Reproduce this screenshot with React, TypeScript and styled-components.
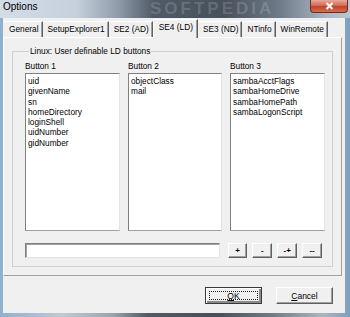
import styled, { createGlobalStyle } from 'styled-components';

const GlobalStyle = createGlobalStyle`
  body {
    margin: 0;
    background: #5d6b7a;
    font-family: "Liberation Sans", Arial, sans-serif;
  }
`;

const Window = styled.div`
  width: 350px;
  height: 317px;
  display: flex;
  flex-direction: column;
  background: linear-gradient(
    90deg,
    #8fb0cf 0%,
    #bfcad6 18%,
    #98a5b3 32%,
    #505b67 42%,
    #46505b 62%,
    #6f7c8a 78%,
    #a9b6c4 92%,
    #7e9fbf 100%
  );
  overflow: hidden;
`;

const TitleBar = styled.div`
  position: relative;
  height: 18px;
  display: flex;
  align-items: flex-start;
  padding-left: 3px;
  background: linear-gradient(
    90deg,
    #d3dde8 0%,
    #c5d0dc 22%,
    #8e9aa8 34%,
    #4f5a66 44%,
    #47515c 64%,
    #6f7b88 80%,
    #aebac7 94%,
    #b9c6d4 100%
  );
`;

const Title = styled.span`
  font-size: 10px;
  line-height: 14px;
  color: #000;
  z-index: 1;
`;

const Watermark = styled.span`
  position: absolute;
  left: 150px;
  top: 0;
  font-size: 17px;
  line-height: 18px;
  font-weight: bold;
  letter-spacing: 3px;
  color: rgba(255, 255, 255, 0.16);
  pointer-events: none;
`;

const CloseButton = styled.div`
  margin-left: auto;
  margin-right: 2px;
  width: 36px;
  height: 12px;
  display: flex;
  align-items: center;
  justify-content: center;
  border: 1px solid #6b2c22;
  border-top: none;
  border-radius: 0 0 4px 4px;
  background: linear-gradient(#e9a898 0%, #d66b55 45%, #c0432b 55%, #d2704f 100%);
  z-index: 1;
`;

const Client = styled.div`
  flex: 1;
  margin: 0 5px 4px 3px;
  background: #f0f0f0;
  display: flex;
  flex-direction: column;
  font-size: 8.3px;
  color: #000;
`;

const TabStrip = styled.div`
  height: 19px;
  display: flex;
  align-items: flex-end;
  padding-left: 1px;
`;

const Tab = styled.div<{ $active?: boolean }>`
  position: relative;
  box-sizing: border-box;
  height: ${(p) => (p.$active ? '19px' : '16px')};
  margin-bottom: ${(p) => (p.$active ? '-1px' : '0')};
  padding: ${(p) => (p.$active ? '2px 4px 0 5px' : '2px 3px 0 5px')};
  line-height: 11px;
  background: #f0f0f0;
  border-top: 1px solid #ffffff;
  border-left: ${(p) => (p.$active ? '1px solid #ffffff' : 'none')};
  border-right: 1px solid #5f5f5f;
  box-shadow: inset -1px 0 #a0a0a0;
  white-space: nowrap;
  z-index: ${(p) => (p.$active ? 2 : 1)};
`;

const Panel = styled.div`
  box-sizing: border-box;
  height: 239px;
  margin-right: 3px;
  padding: 8px;
  border-top: 1px solid #ffffff;
  border-left: 1px solid #ffffff;
  border-right: 1px solid #a0a0a0;
  border-bottom: 1px solid #a0a0a0;
  display: flex;
`;

const GroupBox = styled.fieldset`
  flex: 1;
  margin: 0;
  min-width: 0;
  padding: 5px 10px 8px 12px;
  border: 1px solid #d0d0d0;
  display: flex;
  flex-direction: column;
`;

const Legend = styled.legend`
  margin-left: 4px;
  padding: 0 1px;
  line-height: 10px;
`;

const Columns = styled.div`
  display: grid;
  grid-template-columns: 95px 94px 95px;
  column-gap: 8px;
`;

const Column = styled.div`
  display: flex;
  flex-direction: column;
`;

const ColumnLabel = styled.div`
  height: 10px;
  line-height: 10px;
  margin-bottom: 2px;
`;

const ListBox = styled.div`
  box-sizing: border-box;
  height: 158px;
  padding: 2px 2px;
  background: #ffffff;
  border: 1px solid;
  border-color: #7f7f7f #e3e3e3 #a0a0a0 #7f7f7f;
`;

const ListItem = styled.div`
  line-height: 10.3px;
  white-space: nowrap;
`;

const EditRow = styled.div`
  display: flex;
  margin-top: 12px;
  gap: 5px;
`;

const TextInput = styled.div`
  box-sizing: border-box;
  width: 196px;
  height: 15px;
  margin-right: 3px;
  background: #ffffff;
  border: 1px solid;
  border-color: #7f7f7f #e3e3e3 #e3e3e3 #7f7f7f;
  box-shadow: inset 1px 1px #a0a0a0;
`;

const SmallButton = styled.div`
  box-sizing: border-box;
  width: 20px;
  height: 15px;
  display: flex;
  align-items: center;
  justify-content: center;
  font-size: 8px;
  font-weight: bold;
  background: #f0f0f0;
  border: 1px solid;
  border-color: #ffffff #5f5f5f #5f5f5f #ffffff;
  box-shadow: inset -1px -1px #a0a0a0;
`;

const Footer = styled.div`
  flex: 1;
  display: flex;
  justify-content: flex-end;
  align-items: flex-start;
  gap: 14px;
  padding: 11px 12px 0 0;
`;

const DialogButton = styled.div<{ $default?: boolean }>`
  position: relative;
  box-sizing: border-box;
  width: 57px;
  height: 17px;
  display: flex;
  align-items: center;
  justify-content: center;
  font-size: 8.5px;
  background: #f0f0f0;
  border: 1px solid;
  border-color: ${(p) =>
    p.$default ? '#3a3a3a' : '#ffffff #5f5f5f #5f5f5f #ffffff'};
  box-shadow: ${(p) =>
    p.$default
      ? 'inset 1px 1px #ffffff, inset -2px -2px #8a8a8a'
      : 'inset -1px -1px #a0a0a0'};

  &::after {
    content: '';
    display: ${(p) => (p.$default ? 'block' : 'none')};
    position: absolute;
    inset: 3px;
    border: 1px dotted #202020;
  }
`;

const columns = [
  {
    label: 'Button 1',
    items: ['uid', 'givenName', 'sn', 'homeDirectory', 'loginShell', 'uidNumber', 'gidNumber'],
  },
  { label: 'Button 2', items: ['objectClass', 'mail'] },
  {
    label: 'Button 3',
    items: ['sambaAcctFlags', 'sambaHomeDrive', 'sambaHomePath', 'sambaLogonScript'],
  },
];

const tabs = ['General', 'SetupExplorer1', 'SE2 (AD)', 'SE4 (LD)', 'SE3 (ND)', 'NTinfo', 'WinRemote'];

export default function App() {
  return (
    <>
      <GlobalStyle />
      <Window>
        <TitleBar>
          <Title>Options</Title>
          <Watermark>SOFTPEDIA</Watermark>
          <CloseButton>
            <svg width="9" height="8" viewBox="0 0 9 8">
              <path d="M1.5 1 L7.5 7 M7.5 1 L1.5 7" stroke="#ffffff" strokeWidth="2" />
            </svg>
          </CloseButton>
        </TitleBar>
        <Client>
          <TabStrip>
            {tabs.map((t) => (
              <Tab key={t} $active={t === 'SE4 (LD)'}>
                {t}
              </Tab>
            ))}
          </TabStrip>
          <Panel>
            <GroupBox>
              <Legend>Linux: User definable LD buttons</Legend>
              <Columns>
                {columns.map((c) => (
                  <Column key={c.label}>
                    <ColumnLabel>{c.label}</ColumnLabel>
                    <ListBox>
                      {c.items.map((i) => (
                        <ListItem key={i}>{i}</ListItem>
                      ))}
                    </ListBox>
                  </Column>
                ))}
              </Columns>
              <EditRow>
                <TextInput />
                <SmallButton>+</SmallButton>
                <SmallButton>-</SmallButton>
                <SmallButton>-+</SmallButton>
                <SmallButton>--</SmallButton>
              </EditRow>
            </GroupBox>
          </Panel>
          <Footer>
            <DialogButton $default>
              <span>
                <u>O</u>K
              </span>
            </DialogButton>
            <DialogButton>
              <span>
                <u>C</u>ancel
              </span>
            </DialogButton>
          </Footer>
        </Client>
      </Window>
    </>
  );
}
